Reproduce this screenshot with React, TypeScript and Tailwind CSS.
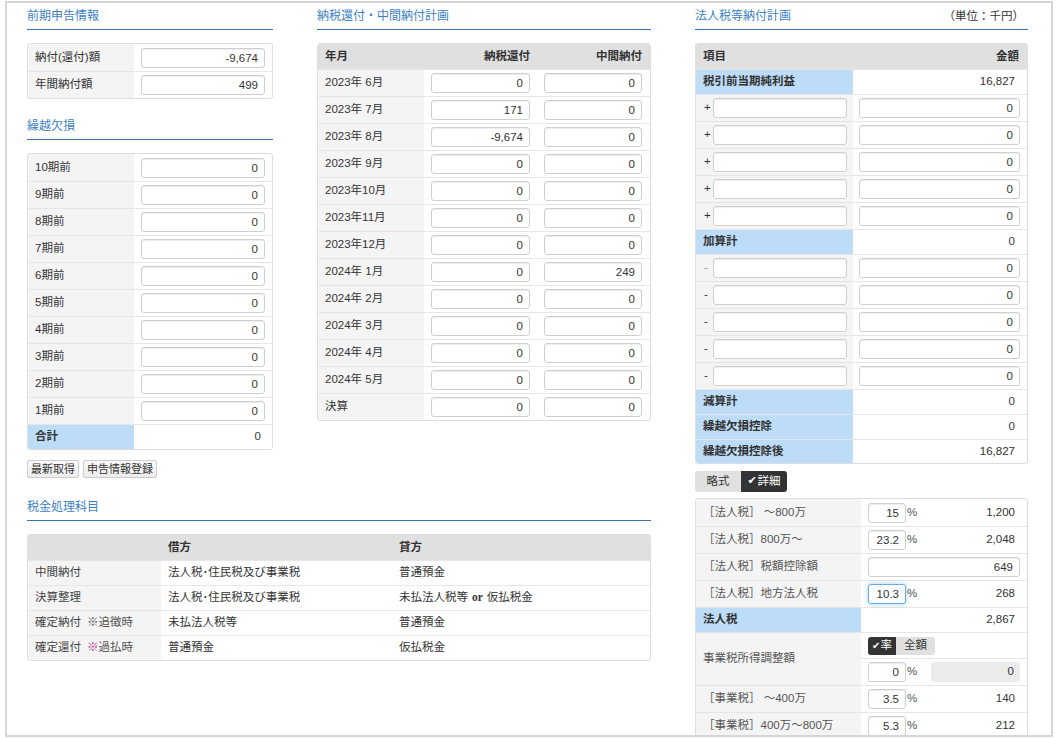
import React from "react";

const font = "font-['Liberation_Sans','Noto_Sans_CJK_JP',sans-serif]";

function Heading({ children, right }: { children: React.ReactNode; right?: React.ReactNode }) {
  return (
    <div className="flex items-center justify-between pt-[4px] pb-[4px] leading-[18px] border-b border-[#3a74b0]">
      <span className="text-[12px] text-[#3d7fc1]">{children}</span>
      {right && <span className="text-[11.5px] text-[#333] pr-[4px]">{right}</span>}
    </div>
  );
}

function NumInput({ value = "", className = "", focused = false }: { value?: string; className?: string; focused?: boolean }) {
  return (
    <input
      readOnly
      value={value}
      className={
        "h-[20px] min-w-0 rounded-[3px] border bg-white text-right pr-[6px] text-[11.5px] text-[#333] outline-none " +
        (focused
          ? "border-[#66afe9] shadow-[0_0_5px_rgba(102,175,233,0.6)] "
          : "border-[#cfcfcf] shadow-[inset_0_1px_1px_rgba(0,0,0,0.075)] ") +
        className
      }
    />
  );
}

const kessonRows = ["10期前", "9期前", "8期前", "7期前", "6期前", "5期前", "4期前", "3期前", "2期前", "1期前"];

const planRows: [string, string, string][] = [
  ["2023年 6月", "0", "0"],
  ["2023年 7月", "171", "0"],
  ["2023年 8月", "-9,674", "0"],
  ["2023年 9月", "0", "0"],
  ["2023年10月", "0", "0"],
  ["2023年11月", "0", "0"],
  ["2023年12月", "0", "0"],
  ["2024年 1月", "0", "249"],
  ["2024年 2月", "0", "0"],
  ["2024年 3月", "0", "0"],
  ["2024年 4月", "0", "0"],
  ["2024年 5月", "0", "0"],
  ["決算", "0", "0"],
];

function LeftColumn() {
  return (
    <div className="w-[246px]">
      <Heading>前期申告情報</Heading>
      <div className="mt-[13px] rounded-[3px] border border-[#dddddd] overflow-hidden">
        {[
          ["納付(還付)額", "-9,674"],
          ["年間納付額", "499"],
        ].map(([label, v], i) => (
          <div key={label} className={"flex h-[27px] " + (i > 0 ? "border-t border-[#e6e6e6]" : "")}>
            <div className="w-[106px] bg-[#f4f4f4] flex items-center pl-[7px]">{label}</div>
            <div className="flex-1 flex items-center px-[7px]">
              <NumInput value={v} className="w-full" />
            </div>
          </div>
        ))}
      </div>

      <div className="mt-[14px]">
        <Heading>繰越欠損</Heading>
      </div>
      <div className="mt-[13px] rounded-[3px] border border-[#dddddd] overflow-hidden">
        {kessonRows.map((label, i) => (
          <div key={label} className={"flex h-[27px] " + (i > 0 ? "border-t border-[#e6e6e6]" : "")}>
            <div className="w-[106px] bg-[#f4f4f4] flex items-center pl-[7px]">{label}</div>
            <div className="flex-1 flex items-center px-[7px]">
              <NumInput value="0" className="w-full" />
            </div>
          </div>
        ))}
        <div className="flex h-[25px] border-t border-[#e6e6e6]">
          <div className="w-[106px] bg-[#bddcf7] flex items-center pl-[7px] font-bold">合計</div>
          <div className="flex-1 flex items-center justify-end pr-[11px]">0</div>
        </div>
      </div>

      <div className="mt-[10px] flex gap-[4px]">
        <button className="h-[18px] px-[3px] rounded-[2px] border border-[#cccccc] bg-gradient-to-b from-[#fafafa] to-[#ececec] text-[11px] leading-[16px] text-[#333]">最新取得</button>
        <button className="h-[18px] px-[3px] rounded-[2px] border border-[#cccccc] bg-gradient-to-b from-[#fafafa] to-[#ececec] text-[11px] leading-[16px] text-[#333]">申告情報登録</button>
      </div>
    </div>
  );
}

function PlanColumn() {
  return (
    <div className="w-[334px]">
      <Heading>納税還付・中間納付計画</Heading>
      <div className="mt-[13px] rounded-[3px] border border-[#dddddd] overflow-hidden">
        <div className="grid grid-cols-[106px_113px_1fr] h-[25px] bg-[#e0e0e0] font-bold items-center">
          <div className="pl-[7px]">年月</div>
          <div className="text-right pr-[7px]">納税還付</div>
          <div className="text-right pr-[8px]">中間納付</div>
        </div>
        {planRows.map(([label, a, b]) => (
          <div key={label} className="grid grid-cols-[106px_113px_1fr] h-[27px] border-t border-[#e6e6e6]">
            <div className="bg-[#f4f4f4] flex items-center pl-[7px] whitespace-pre">{label}</div>
            <div className="flex items-center pl-[7px] pr-[7px]">
              <NumInput value={a} className="w-full" />
            </div>
            <div className="flex items-center pl-[7px] pr-[8px]">
              <NumInput value={b} className="w-full" />
            </div>
          </div>
        ))}
      </div>
    </div>
  );
}

function TaxAccounts() {
  const rows: [React.ReactNode, React.ReactNode, React.ReactNode][] = [
    ["中間納付", "法人税･住民税及び事業税", "普通預金"],
    ["決算整理", "法人税･住民税及び事業税", <>未払法人税等<span className="mx-[4px] font-['Liberation_Serif'] font-bold">or</span>仮払税金</>],
    [<>確定納付<span className="ml-[6px] text-[#555]">※追徴時</span></>, "未払法人税等", "普通預金"],
    [<>確定還付<span className="ml-[6px] text-[#c2338a]">※</span><span className="text-[#555]">過払時</span></>, "普通預金", "仮払税金"],
  ];
  return (
    <div className="mt-[16px]">
      <Heading>税金処理科目</Heading>
      <div className="mt-[13px] rounded-[3px] border border-[#dddddd] overflow-hidden">
        <div className="grid grid-cols-[133px_231px_1fr] h-[25px] bg-[#e0e0e0] font-bold items-center">
          <div />
          <div className="pl-[7px]">借方</div>
          <div className="pl-[7px]">貸方</div>
        </div>
        {rows.map((r, i) => (
          <div key={i} className="grid grid-cols-[133px_231px_1fr] h-[25px] border-t border-[#e6e6e6]">
            <div className="bg-[#f4f4f4] flex items-center pl-[7px] text-[#444]">{r[0]}</div>
            <div className="flex items-center pl-[7px]">{r[1]}</div>
            <div className="flex items-center pl-[7px]">{r[2]}</div>
          </div>
        ))}
      </div>
    </div>
  );
}

function CorpTaxColumn() {
  const blueRow = (label: string, value: string, h: string) => (
    <div className={"flex border-t border-[#e6e6e6] " + h}>
      <div className="w-[157px] bg-[#bddcf7] flex items-center pl-[7px] font-bold">{label}</div>
      <div className="flex-1 flex items-center justify-end pr-[12px]">{value}</div>
    </div>
  );
  const signRow = (sign: string, k: number, light = false) => (
    <div key={sign + k} className="flex h-[27px] border-t border-[#e6e6e6]">
      <div className="w-[157px] bg-[#f4f4f4] flex items-center pl-[8px] pr-[6px] gap-[3px]">
        <span className={"w-[6px] " + (light ? "text-[#999]" : "text-[#333]")}>{sign}</span>
        <input readOnly className="h-[20px] flex-1 min-w-0 rounded-[3px] border border-[#cfcfcf] bg-white outline-none shadow-[inset_0_1px_1px_rgba(0,0,0,0.075)]" />
      </div>
      <div className="flex-1 flex items-center pl-[6px] pr-[7px]">
        <NumInput value="0" className="w-full" />
      </div>
    </div>
  );

  const pctRow = (label: string, pct: string, value: string, focused = false) => (
    <div key={label} className="flex h-[27px] border-t border-[#e6e6e6]">
      <div className="w-[165px] bg-[#f4f4f4] flex items-center pl-[7px] text-[#555]">{label}</div>
      <div className="flex-1 flex items-center pl-[7px]">
        <NumInput value={pct} focused={focused} className="w-[38px] pr-[4px]" />
        <span className="ml-[1px] text-[#555]">%</span>
        <span className="flex-1 text-right pr-[12px]">{value}</span>
      </div>
    </div>
  );

  return (
    <div className="w-[333px]">
      <Heading right="（単位：千円）">法人税等納付計画</Heading>
      <div className="mt-[13px] rounded-[3px] border border-[#dddddd] overflow-hidden">
        <div className="flex h-[25px] bg-[#e0e0e0] font-bold items-center justify-between pl-[7px] pr-[8px]">
          <span>項目</span>
          <span>金額</span>
        </div>
        {blueRow("税引前当期純利益", "16,827", "h-[25px]")}
        {[0, 1, 2, 3, 4].map((k) => signRow("+", k))}
        {blueRow("加算計", "0", "h-[25px]")}
        {[0, 1, 2, 3, 4].map((k) => signRow("-", k, k === 0))}
        {blueRow("減算計", "0", "h-[25px]")}
        {blueRow("繰越欠損控除", "0", "h-[25px]")}
        {blueRow("繰越欠損控除後", "16,827", "h-[24px]")}
      </div>

      <div className="mt-[7px] flex h-[21px] text-[11.5px]">
        <div className="w-[46px] bg-[#e0e0e0] rounded-l-[3px] flex items-center justify-center text-[#333]">略式</div>
        <div className="w-[46px] bg-[#333333] rounded-r-[3px] flex items-center justify-center text-white gap-[1px]">
          <span className="font-['DejaVu_Sans'] text-[11px]">✔</span>詳細
        </div>
      </div>

      <div className="mt-[6px] rounded-[3px] border border-[#dddddd] overflow-hidden [&>div:first-child]:border-t-0">
        {pctRow("［法人税］ ～800万", "15", "1,200")}
        {pctRow("［法人税］800万～", "23.2", "2,048")}
        <div className="flex h-[27px] border-t border-[#e6e6e6]">
          <div className="w-[165px] bg-[#f4f4f4] flex items-center pl-[7px] text-[#555]">［法人税］税額控除額</div>
          <div className="flex-1 flex items-center pl-[7px] pr-[7px]">
            <NumInput value="649" className="w-full" />
          </div>
        </div>
        {pctRow("［法人税］地方法人税", "10.3", "268", true)}
        <div className="flex h-[25px] border-t border-[#e6e6e6]">
          <div className="w-[165px] bg-[#bddcf7] flex items-center pl-[7px] font-bold">法人税</div>
          <div className="flex-1 flex items-center justify-end pr-[12px]">2,867</div>
        </div>
        <div className="flex h-[53px] border-t border-[#e6e6e6]">
          <div className="w-[165px] bg-[#f4f4f4] flex items-center pl-[7px] text-[#555]">事業税所得調整額</div>
          <div className="flex-1 flex flex-col">
            <div className="h-[26px] flex items-center pl-[7px] border-b border-[#e6e6e6]">
              <div className="flex h-[18px] text-[11.5px]">
                <div className="w-[28px] bg-[#333333] rounded-l-[3px] flex items-center justify-center text-white">
                  <span className="font-['DejaVu_Sans'] text-[10px]">✔</span>率
                </div>
                <div className="w-[39px] bg-[#e0e0e0] rounded-r-[3px] flex items-center justify-center text-[#333]">全額</div>
              </div>
            </div>
            <div className="flex-1 flex items-center pl-[7px] pr-[7px]">
              <NumInput value="0" className="w-[38px] pr-[4px]" />
              <span className="ml-[1px] text-[#555]">%</span>
              <div className="ml-[14px] flex-1 h-[20px] rounded-[3px] bg-[#ececec] flex items-center justify-end pr-[6px]">0</div>
            </div>
          </div>
        </div>
        {pctRow("［事業税］ ～400万", "3.5", "140")}
        {pctRow("［事業税］400万～800万", "5.3", "212")}
      </div>
    </div>
  );
}

export default function App() {
  return (
    <div className={"bg-white pl-[5px] pt-[1px] text-[11.5px] text-[#333] " + font}>
      <div className="w-[1048px] h-[736px] border-2 border-[#d6d6d6] overflow-hidden flex pl-[20px] gap-[44px]">
        {/* left: two columns + accounts table */}
        <div className="w-[624px]">
          <div className="flex gap-[44px] items-start">
            <LeftColumn />
            <PlanColumn />
          </div>
          <TaxAccounts />
        </div>
        {/* right: corporate tax plan */}
        <CorpTaxColumn />
      </div>
    </div>
  );
}
